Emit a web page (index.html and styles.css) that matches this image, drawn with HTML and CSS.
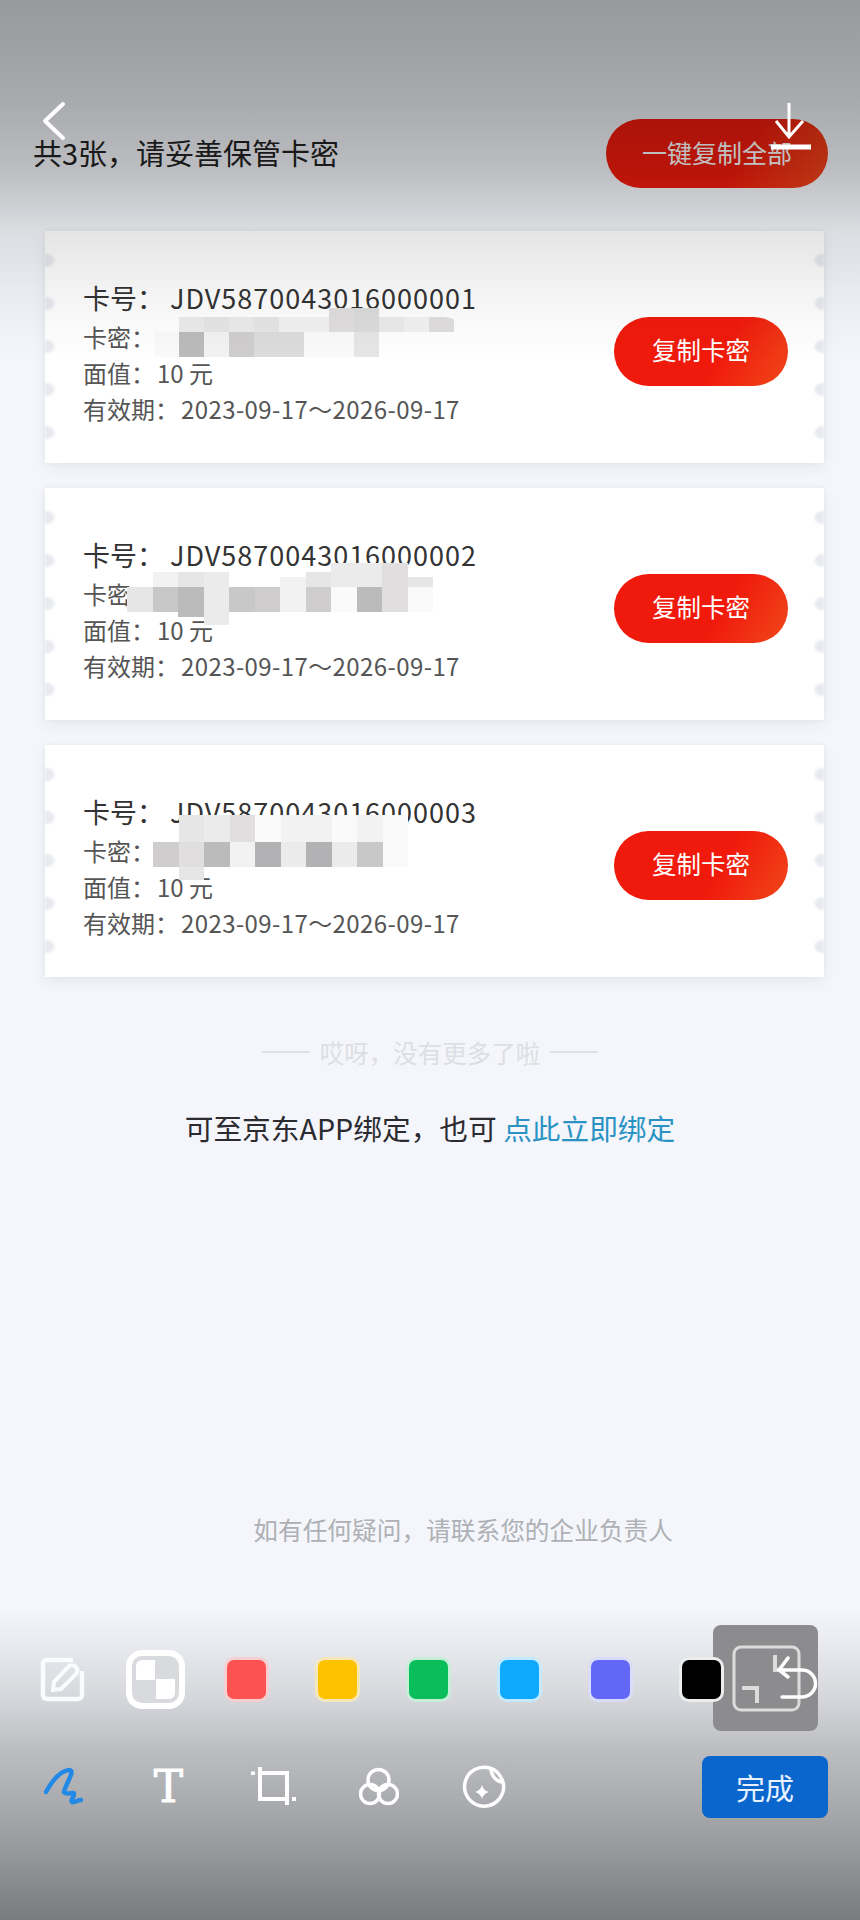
FILE: index.html
```html
<!DOCTYPE html>
<html lang="zh-CN">
<head>
  <meta charset="UTF-8">
  <meta name="viewport" content="width=device-width, initial-scale=1.0">
  <title>卡密</title>
  <link rel="stylesheet" href="styles.css">
</head>
<body>
  <div class="page">
    <div class="header">
      <div class="header-title">共3张，请妥善保管卡密</div>
      <div class="btn btn-all">一键复制全部</div>
    </div>

    <div class="card-list">
      <div class="card">
        <div class="card-info">
          <div class="card-no">卡号：<span class="card-no-val">JDV5870043016000001</span></div>
          <div class="card-line">卡密：</div>
          <div class="card-line">面值：<span class="val">10 元</span></div>
          <div class="card-line">有效期：<span class="val val-date">2023-09-17～2026-09-17</span></div>
        </div>
        <div class="btn btn-copy">复制卡密</div>
        <div class="mosaic mosaic-1">
          <i></i><i class="low c8"></i><i class="low c7"></i><i class="low c8"></i><i class="low c7"></i><i class="low c9"></i><i class="low c9"></i><i class="c6"></i><i class="c5"></i><i class="low c8"></i><i class="low c9"></i><i class="low c6 tip"></i>
          <i class="c10"></i><i class="c2"></i><i class="c9"></i><i class="c4"></i><i class="c5"></i><i class="c5"></i><i class="c10"></i><i class="c10"></i><i class="c7"></i><i></i><i></i><i></i>
        </div>
      </div>

      <div class="card">
        <div class="card-info">
          <div class="card-no">卡号：<span class="card-no-val">JDV5870043016000002</span></div>
          <div class="card-line">卡密：</div>
          <div class="card-line">面值：<span class="val">10 元</span></div>
          <div class="card-line">有效期：<span class="val val-date">2023-09-17～2026-09-17</span></div>
        </div>
        <div class="btn btn-copy">复制卡密</div>
        <div class="mosaic mosaic-2">
          <i></i><i class="low c9"></i><i class="low c7"></i><i class="low c8"></i><i></i><i></i><i class="lower c9"></i><i class="low c7"></i><i class="c8"></i><i class="c8"></i><i class="c6"></i><i class="lower c7"></i>
          <i class="c7"></i><i class="c3"></i><i class="c2"></i><i class="c8"></i><i class="c3"></i><i class="c4"></i><i class="c9"></i><i class="c4"></i><i class="c10"></i><i class="c2"></i><i class="c6"></i><i class="c10"></i>
          <i></i><i></i><i class="c2 short"></i><i class="c8"></i><i></i><i></i><i></i><i></i><i></i><i></i><i></i><i></i>
        </div>
      </div>

      <div class="card">
        <div class="card-info">
          <div class="card-no">卡号：<span class="card-no-val">JDV5870043016000003</span></div>
          <div class="card-line">卡密：</div>
          <div class="card-line">面值：<span class="val">10 元</span></div>
          <div class="card-line">有效期：<span class="val val-date">2023-09-17～2026-09-17</span></div>
        </div>
        <div class="btn btn-copy">复制卡密</div>
        <div class="mosaic mosaic-3">
          <i></i><i class="c7"></i><i class="c8"></i><i class="c6"></i><i class="c10"></i><i class="c9"></i><i class="c9"></i><i class="c10"></i><i class="c9"></i><i class="c10"></i>
          <i class="c4"></i><i class="c6"></i><i class="c2"></i><i class="c9"></i><i class="c1"></i><i class="c8"></i><i class="c1"></i><i class="c8"></i><i class="c3"></i><i class="c10"></i>
          <i></i><i class="c7"></i><i></i><i></i><i></i><i></i><i></i><i></i><i></i><i></i>
        </div>
      </div>
    </div>

    <div class="tip-line"><span class="dash"></span>哎呀，没有更多了啦<span class="dash"></span></div>
    <div class="bind">可至京东APP绑定，也可 <span class="bind-link">点此立即绑定</span></div>
    <div class="contact">如有任何疑问，请联系您的企业负责人</div>

    <div class="shade-top"></div>
    <div class="shade-bottom"></div>

    <svg class="back" width="32" height="44" viewBox="0 0 32 44"><path d="M23 4 L5 21 L23 38" fill="none" stroke="#fff" stroke-width="4" stroke-linecap="round" stroke-linejoin="round"/></svg>
    <svg class="download" width="40" height="48" viewBox="0 0 40 48"><path d="M18 0V34M5 18L18 34L32 18" fill="none" stroke="#fff" stroke-width="3"/><path d="M0 44H40" stroke="#fff" stroke-width="5"/></svg>

    <div class="scroll-box">
      <svg width="105" height="106" viewBox="0 0 105 106">
        <rect x="21" y="22" width="65" height="63" rx="7" fill="none" stroke="#dcdcdc" stroke-width="3"/>
        <path d="M62 30V45H72M29 63H44V78" fill="none" stroke="#dcdcdc" stroke-width="4"/>
        <path d="M75 33L66 45L75 52M66 45H89A13.500 13.500 0 0 1 89 72H69" fill="none" stroke="#fff" stroke-width="3.500" stroke-linecap="round"/>
      </svg>
    </div>

    <div class="toolbar">
      <div class="colors">
        <svg class="edit-icon" width="45" height="45" viewBox="0 0 45 45">
          <path d="M33 3H7A4 4 0 0 0 3 7V38A4 4 0 0 0 7 42H38A4 4 0 0 0 42 38V14" fill="none" stroke="#fafbfd" stroke-width="4.500"/>
          <path d="M13 33L14 25L28 10A5 5 0 0 1 36 17L21 32Z" fill="none" stroke="#fafbfd" stroke-width="4"/>
        </svg>
        <div class="swatch-alpha"><div class="checks"></div></div>
        <div class="swatch red"></div>
        <div class="swatch yellow"></div>
        <div class="swatch green"></div>
        <div class="swatch blue"></div>
        <div class="swatch purple"></div>
        <div class="swatch black"></div>
      </div>
      <div class="tools">
        <svg class="tool-pen" width="40" height="40" viewBox="0 0 40 40"><path d="M2 25C8 14 16 4 25 3C32 3 22 16 20 25C22 29 30 24 30 27C30 31 26 33 28 35C31 36 33 33 37 33" fill="none" stroke="#2389e6" stroke-width="4.500" stroke-linecap="round" stroke-linejoin="round"/></svg>
        <span class="tool-text">T</span>
        <svg class="tool-crop" width="45" height="40" viewBox="0 0 45 40"><path d="M9 0V32H37M9 6H36V38" fill="none" stroke="#fff" stroke-width="4"/><path d="M0 4.500H4V8H0ZM41 30H45V34H41Z" fill="#fff"/></svg>
        <svg class="tool-mix" width="40" height="40" viewBox="0 0 40 40"><g fill="none" stroke="#fff" stroke-width="3.500"><circle cx="19.500" cy="13" r="10.500"/><circle cx="11" cy="27" r="9.500"/><circle cx="29" cy="27" r="9.500"/></g></svg>
        <svg class="tool-sticker" width="44" height="44" viewBox="0 0 44 44">
          <path d="M29 3.500A19.500 19.500 0 1 0 41 17C35 17 29 11 29 3.500Q37 6 41 17" fill="none" stroke="#fff" stroke-width="3.500" stroke-linejoin="round"/>
          <path d="M20 20Q21.500 25.500 27 27Q21.500 28.500 20 34Q18.500 28.500 13 27Q18.500 25.500 20 20Z" fill="#fff"/>
        </svg>
        <div class="btn-done">完成</div>
      </div>
    </div>
  </div>
</body>
</html>
```

FILE: styles.css
```css
body {
  margin: 0;
  background: #f4f6fb;
  font-family: "Noto Sans CJK SC", "Noto Sans", sans-serif;
  color: #333;
}
.page {
  position: relative;
  width: 860px;
  height: 1920px;
  overflow: hidden;
  padding-top: 119px;
  box-sizing: border-box;
}
.header {
  display: flex;
  justify-content: space-between;
  align-items: center;
  padding: 0 32px 0 33px;
}
.header-title {
  padding-bottom: 4px;
  font-size: 29px;
  color: #222;
}
.btn {
  display: flex;
  justify-content: center;
  align-items: center;
  height: 69px;
  box-sizing: border-box;
  padding-bottom: 4px;
  border-radius: 35px;
  color: #fff;
  background: linear-gradient(120deg, #f01a0c 60%, #f0481a);
}
.btn-all {
  width: 222px;
  font-size: 25px;
}
.btn-copy {
  width: 174px;
  margin-top: 37px;
  font-size: 24.500px;
}
.card-list {
  display: flex;
  flex-direction: column;
  gap: 25px;
  margin: 43px 36px 0 45px;
}
.card {
  position: relative;
  display: flex;
  justify-content: space-between;
  align-items: flex-start;
  height: 232px;
  box-sizing: border-box;
  padding: 49px 36px 0 38px;
  background: #fff;
  box-shadow: 0 5px 14px rgba(40, 50, 80, 0.06), 0 0 5px rgba(40, 50, 80, 0.05);
}
/* scalloped ticket edges */
.card::before,
.card::after {
  content: "";
  position: absolute;
  top: 8px;
  bottom: 6px;
  width: 12px;
  background-size: 12px 43px;
  background-repeat: repeat-y;
  filter: blur(1px);
}
.card::before {
  left: 0;
  background-image: radial-gradient(ellipse 10px 7px at 0 50%, #e8eaf0 90%, transparent);
}
.card::after {
  right: 0;
  background-image: radial-gradient(ellipse 10px 7px at 100% 50%, #e8eaf0 90%, transparent);
}
.card-no {
  height: 36px;
  line-height: 36px;
  margin-bottom: 3px;
  font-size: 27px;
  color: #333;
}
.card-no-val {
  margin-left: 6px;
  letter-spacing: 1px;
}
.card-line {
  height: 36px;
  line-height: 36px;
  font-size: 24px;
  color: #555;
}
.val {
  margin-left: 2px;
}
.val-date {
  letter-spacing: 0.4px;
}
.mosaic {
  position: absolute;
  display: grid;
  filter: blur(0.5px);
}
.mosaic i {
  display: block;
  background-clip: content-box;
}
.mosaic-1 {
  left: 109px;
  top: 77px;
  grid-template-columns: repeat(12, 25px);
  grid-template-rows: 24px 25px;
}
.mosaic-2 {
  left: 82px;
  top: 75px;
  grid-template-columns: repeat(12, 25.500px);
  grid-template-rows: 24px 25px 13px;
}
.mosaic-3 {
  left: 108px;
  top: 70px;
  grid-template-columns: repeat(10, 25.500px);
  grid-template-rows: 27px 25px 13px;
}
.mosaic .low { padding-top: 9px; }
.mosaic .lower { padding-top: 14px; }
.mosaic .short { padding-bottom: 8px; }
.mosaic .tip { border-radius: 0 12px 0 0; }
.c1 { background-color: #b2b1b3; }
.c2 { background-color: #bbbbbc; }
.c3 { background-color: #c8c8c9; }
.c4 { background-color: #d0cdcf; }
.c5 { background-color: #dcdcdc; }
.c6 { background-color: #e0dedf; }
.c7 { background-color: #e6e6e6; }
.c8 { background-color: #ebebeb; }
.c9 { background-color: #f2f2f3; }
.c10 { background-color: #fafafa; }
.tip-line {
  display: flex;
  justify-content: center;
  align-items: center;
  gap: 10px;
  height: 34px;
  margin-top: 58px;
  font-size: 24.500px;
  color: #dddfe4;
}
.dash {
  width: 48px;
  height: 2px;
  background: #dddfe4;
}
.bind {
  height: 40px;
  line-height: 36px;
  margin-top: 41px;
  text-align: center;
  font-size: 28.700px;
  color: #2b2b30;
}
.bind-link {
  color: #2b93c3;
}
.contact {
  height: 34px;
  line-height: 30px;
  margin-top: 364px;
  padding-right: 187px;
  text-align: right;
  font-size: 24.700px;
  color: #aeb0b5;
}
.shade-top,
.shade-bottom {
  position: absolute;
  left: 0;
  right: 0;
  z-index: 5;
}
.shade-top {
  top: 0;
  height: 360px;
  background: linear-gradient(to bottom,
    rgba(0, 0, 0, 0.38) 0,
    rgba(0, 0, 0, 0.31) 100px,
    rgba(0, 0, 0, 0.23) 170px,
    rgba(0, 0, 0, 0.1) 232px,
    rgba(0, 0, 0, 0.04) 300px,
    rgba(0, 0, 0, 0) 360px);
}
.shade-bottom {
  bottom: 0;
  height: 310px;
  background: linear-gradient(to bottom,
    rgba(0, 0, 0, 0) 0,
    rgba(0, 0, 0, 0.13) 90px,
    rgba(0, 0, 0, 0.23) 140px,
    rgba(0, 0, 0, 0.3) 190px,
    rgba(0, 0, 0, 0.38) 240px,
    rgba(0, 0, 0, 0.5) 310px);
}
.back {
  position: absolute;
  left: 40px;
  top: 100px;
  z-index: 6;
}
.download {
  position: absolute;
  left: 771px;
  top: 103px;
  z-index: 6;
}
.scroll-box {
  position: absolute;
  left: 713px;
  top: 1625px;
  z-index: 6;
  width: 105px;
  height: 106px;
  border-radius: 8px;
  background: #8c8c8f;
}
.scroll-box svg {
  display: block;
}
.toolbar {
  position: relative;
  z-index: 7;
  margin-top: 102px;
}
.colors {
  display: flex;
  align-items: center;
  height: 59px;
  padding-left: 40px;
}
.swatch-alpha {
  display: flex;
  justify-content: center;
  align-items: center;
  width: 59px;
  height: 59px;
  box-sizing: border-box;
  margin: 0 42px 0 41px;
  border: 6px solid #fff;
  border-radius: 16px;
  background: #d9dade;
}
.checks {
  width: 39px;
  height: 39px;
  border-radius: 6px;
  background: conic-gradient(#d9dade 0 25%, #fff 0 50%, #d9dade 0 75%, #fff 0);
}
.swatch {
  width: 39px;
  height: 39px;
  margin-right: 52px;
  border-radius: 7px;
}
.red { background: #fd5252; box-shadow: 0 0 0 3px #f7cfd0; }
.yellow { background: #ffc200; box-shadow: 0 0 0 3px #f6e7b8; }
.green { background: #0abf5b; box-shadow: 0 0 0 3px #c6eed8; }
.blue { background: #0fa9ff; box-shadow: 0 0 0 3px #c6eafd; }
.purple { background: #6267f5; box-shadow: 0 0 0 3px #d9dcfb; }
.black { background: #000; box-shadow: 0 0 0 3px #eceded; }
.tools {
  display: flex;
  align-items: center;
  height: 62px;
  margin-top: 47px;
  padding: 0 32px 0 44px;
}
.tool-text {
  width: 33px;
  margin-left: 68px;
  text-align: center;
  font-family: "DejaVu Serif", serif;
  font-size: 44px;
  line-height: 44px;
  color: #fff;
  -webkit-text-stroke: 1px #fff;
}
.tool-crop { margin-left: 66px; }
.tool-mix { margin-left: 63px; }
.tool-sticker { margin-left: 63px; }
.btn-done {
  display: flex;
  justify-content: center;
  align-items: center;
  width: 126px;
  height: 62px;
  margin-left: auto;
  border-radius: 8px;
  background: #0a66cc;
  font-size: 29px;
  color: #e8f2ff;
}
```
